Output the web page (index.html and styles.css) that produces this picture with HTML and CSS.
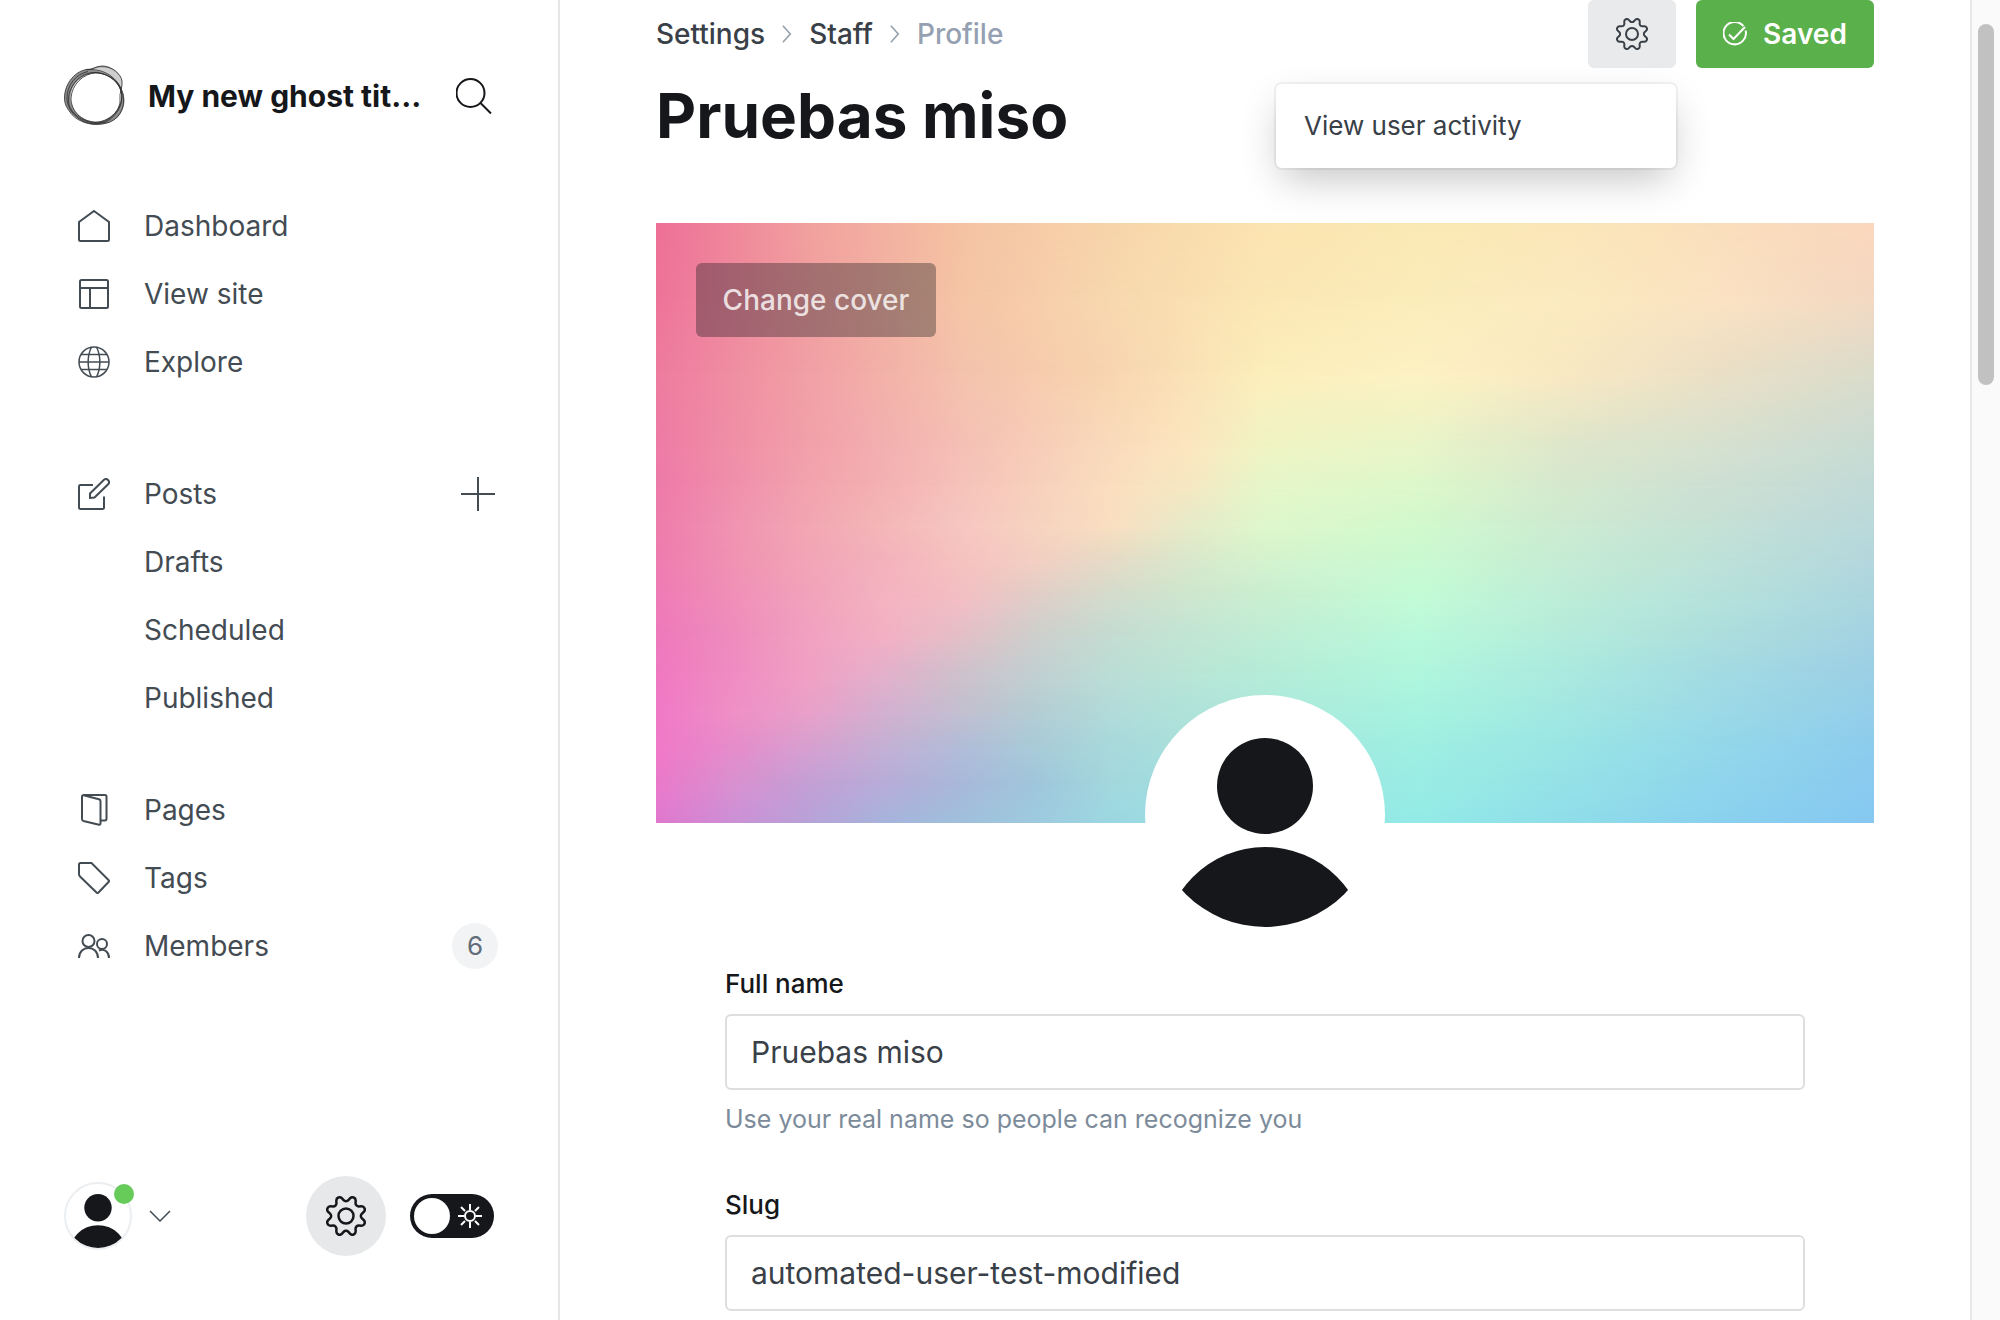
FILE: index.html
```html
<!DOCTYPE html>
<html lang="en">
<head>
<meta charset="utf-8">
<title>Settings - Staff - Profile</title>
<link rel="stylesheet" href="styles.css">
</head>
<body>
<svg class="defs" aria-hidden="true">
  <symbol id="cog" viewBox="0 0 24 24">
    <circle cx="12" cy="12" r="4.5"/>
    <path d="M10.546 2.438a1.957 1.957 0 0 0 2.908 0L14.4 1.4a1.959 1.959 0 0 1 3.41 1.413l-.071 1.4a1.958 1.958 0 0 0 2.051 2.054l1.4-.071a1.959 1.959 0 0 1 1.41 3.41l-1.042.94a1.96 1.96 0 0 0 0 2.909l1.042.94a1.959 1.959 0 0 1-1.413 3.41l-1.4-.071a1.958 1.958 0 0 0-2.056 2.056l.071 1.4A1.959 1.959 0 0 1 14.4 22.6l-.941-1.041a1.959 1.959 0 0 0-2.908 0L9.606 22.6A1.959 1.959 0 0 1 6.2 21.192l.072-1.4a1.958 1.958 0 0 0-2.056-2.056l-1.4.071A1.958 1.958 0 0 1 1.4 14.4l1.041-.94a1.96 1.96 0 0 0 0-2.909L1.4 9.606A1.958 1.958 0 0 1 2.809 6.2l1.4.071a1.958 1.958 0 0 0 2.058-2.06L6.2 2.81A1.959 1.959 0 0 1 9.606 1.4z"/>
  </symbol>
  <symbol id="person" viewBox="0 0 224 224">
    <clipPath id="person-clip"><circle cx="112" cy="112" r="112"/></clipPath>
    <g clip-path="url(#person-clip)">
      <circle cx="112" cy="83" r="48"/>
      <circle cx="112" cy="246" r="102"/>
    </g>
  </symbol>
</svg>
<div class="app">
  <nav class="sidebar" aria-label="Main">
    <header class="brand">
      <svg class="logo" viewBox="0 0 62 62" aria-hidden="true">
        <path class="logo-shade" fill-rule="evenodd" d="M.5 33C.5 20 9 8 22 4.500C28 5 32 1 38 1C48 1 57 9 58 16C58 20 57 24 58.500 27C62 34 61 44 54 52C46 59 38 60 31 59.500C20 59 10 52 6 47C2 42 .5 38 .5 33ZM6.500 32.500A25.500 24 0 1 0 57.500 32.500A25.500 24 0 1 0 6.500 32.500Z"/>
        <path class="logo-light" d="M28 5C38-2 56 5 58 16L58 24C53 12 40 6 28 5Z"/>
        <g class="logo-lines">
          <path d="M.5 33C.5 18 12 5 24 4.500C42 4 53 13 58.500 27C62 38 58 52 46 57C26 64 10 54 6 47C2 42 .5 38 .5 33Z"/>
          <path d="M22 4.500C28 5 32 1 38 1C48 1 57 9 58 16C59 22 55 28 56 34C57 46 44 58 31 59C16 59 3 46 3 33C3 20 12 9 24 6.500"/>
          <path d="M5 40C2 24 14 8 30 7.500C42 8 54 14 57 26C60 38 54 50 42 57C28 61 10 54 5 40Z"/>
          <path d="M7 33C8 19 19 9 32 7.500C44 8 57 18 58 30C58 46 44 57 31 57.500C17 56 7 46 7 33Z"/>
        </g>
      </svg>
      <span class="brand-name">My new ghost tit…</span>
      <button class="icon-button" type="button" aria-label="Search">
        <svg class="search-icon" viewBox="0 0 36 36"><circle cx="14.500" cy="15" r="14"/><path d="M24.500 25L35 35.500"/></svg>
      </button>
    </header>

    <ul class="nav-list">
      <li><a class="nav-link" href="#dashboard">
        <svg class="nav-icon" viewBox="0 0 32 32"><path d="M16 1L31 12V29.500Q31 31 29.500 31H2.500Q1 31 1 29.500V12Z"/></svg>
        Dashboard</a></li>
      <li><a class="nav-link" href="#site">
        <svg class="nav-icon" viewBox="0 0 32 32"><rect x="2" y="2" width="28" height="28" rx="1.500"/><path d="M2 10H30M12 10V30"/></svg>
        View site</a></li>
      <li><a class="nav-link" href="#explore">
        <svg class="nav-icon nav-icon-fine" viewBox="0 0 32 32"><circle cx="16" cy="16" r="15"/><path d="M1 16H31M3 8.500H29M3 23.500H29M13.500 1C9 10 9 22 13.500 31M18.500 1C23 10 23 22 18.500 31"/></svg>
        Explore</a></li>
    </ul>

    <ul class="nav-list">
      <li class="nav-row"><a class="nav-link" href="#posts">
        <svg class="nav-icon" viewBox="0 0 32 32"><path d="M15 7H2.500Q1 7 1 8.500V29.500Q1 31 2.500 31H24.500Q26 31 26 29.500V18.500"/><path d="M12 20V15.500L26 1.700Q28 .2 30 2Q32 4 30.400 6L16.500 19.500Z"/></svg>
        Posts</a>
        <button class="icon-button" type="button" aria-label="New post">
          <svg class="plus-icon" viewBox="0 0 34 34"><path d="M17 0V34M0 17H34"/></svg>
        </button></li>
      <li><a class="nav-link nav-sub" href="#drafts">Drafts</a></li>
      <li><a class="nav-link nav-sub" href="#scheduled">Scheduled</a></li>
      <li><a class="nav-link nav-sub" href="#published">Published</a></li>
    </ul>

    <ul class="nav-list">
      <li><a class="nav-link" href="#pages">
        <svg class="nav-icon" viewBox="0 0 32 32"><path d="M4 2.500Q4 1 5.500 1.300L21 5.300Q22.500 5.800 22.500 7.300V29.500Q22.500 31 21 30.700L5.500 27Q4 26.500 4 25Z"/><path d="M5 1H27Q28.500 1 28.500 2.500V24.500Q28.500 26.500 27 26.500H22.500"/></svg>
        Pages</a></li>
      <li><a class="nav-link" href="#tags">
        <svg class="nav-icon" viewBox="0 0 32 32"><path d="M1 2.500Q1 1 2.500 1H13.500L30.500 18Q31.500 19 30.500 20L20.500 30.500Q19.500 31.500 18.500 30.500L2 14.500Q1 13.500 1 12Z"/></svg>
        Tags</a></li>
      <li class="nav-row"><a class="nav-link" href="#members">
        <svg class="nav-icon" viewBox="0 0 32 32"><circle cx="10.500" cy="11" r="6"/><circle cx="24" cy="14" r="5"/><path d="M1 28C1 14.500 20 14.500 20 28M21 20.500C26 18 31 22 31 28"/></svg>
        Members</a>
        <span class="count">6</span></li>
    </ul>

    <footer class="sidebar-footer">
      <button class="user-menu" type="button" aria-label="Account menu">
        <span class="user-avatar"><svg class="user-figure"><use href="#person"/></svg><span class="user-dot"></span></span>
        <svg class="chevron-down" viewBox="0 0 22 12"><path d="M1 1L11 11L21 1"/></svg>
      </button>
      <a class="settings-link" href="#settings" aria-label="Settings"><svg class="settings-icon"><use href="#cog"/></svg></a>
      <label class="theme-switch">
        <input class="theme-input" type="checkbox" aria-label="Dark mode">
        <span class="theme-knob"></span>
        <svg class="sun-icon" viewBox="0 0 24 24"><circle cx="12" cy="12" r="5"/><path d="M12 0V6M12 18V24M0 12H6M18 12H24M3 3L7 7M17 17L21 21M3 21L7 17M17 7L21 3"/></svg>
      </label>
    </footer>
  </nav>

  <main class="main">
    <header class="page-header">
      <div class="heading">
        <nav class="breadcrumb" aria-label="Breadcrumb">
          <a href="#settings">Settings</a>
          <svg class="crumb-arrow" viewBox="0 0 12 22"><path d="M1 1L10 11L1 21"/></svg>
          <a href="#staff">Staff</a>
          <svg class="crumb-arrow" viewBox="0 0 12 22"><path d="M1 1L10 11L1 21"/></svg>
          <span class="crumb-current">Profile</span>
        </nav>
        <h1 class="page-title">Pruebas miso</h1>
      </div>
      <div class="actions">
        <div class="menu-anchor">
          <button class="menu-button" type="button" aria-label="User actions" aria-expanded="true"><svg class="menu-icon"><use href="#cog"/></svg></button>
          <div class="menu"><button class="menu-item" type="button">View user activity</button></div>
        </div>
        <button class="save-button" type="button">
          <svg class="saved-icon" viewBox="0 0 24 24"><path d="M20.500 4.200A11.200 11.200 0 1 0 22.600 8.500"/><path d="M6 12.500L10.500 17L22 5"/></svg>
          Saved</button>
      </div>
    </header>

    <section class="cover" aria-label="Cover image">
      <div class="wash wash-14"></div>
      <div class="wash wash-13"></div>
      <div class="wash wash-12"></div>
      <div class="wash wash-11"></div>
      <div class="wash wash-10"></div>
      <div class="wash wash-9"></div>
      <div class="wash wash-8"></div>
      <div class="wash wash-7"></div>
      <div class="wash wash-6"></div>
      <div class="wash wash-5"></div>
      <div class="wash wash-4"></div>
      <div class="wash wash-3"></div>
      <div class="wash wash-2"></div>
      <div class="wash wash-1"></div>
      <button class="cover-button" type="button">Change cover</button>
      <div class="profile-photo"><svg class="profile-figure"><use href="#person"/></svg></div>
    </section>

    <form class="profile-form">
      <div class="field">
        <label class="field-label" for="full-name">Full name</label>
        <input class="field-input" id="full-name" type="text" value="Pruebas miso">
        <p class="field-help">Use your real name so people can recognize you</p>
      </div>
      <div class="field">
        <label class="field-label" for="slug">Slug</label>
        <input class="field-input" id="slug" type="text" value="automated-user-test-modified">
      </div>
    </form>
  </main>
  <div class="scroll-track" aria-hidden="true"><div class="scroll-thumb"></div></div>
</div>
</body>
</html>
```
FILE: styles.css
```css
* { box-sizing: border-box; }

body {
  margin: 0;
  background: #fff;
  color: #15171a;
  font-family: Inter, "Liberation Sans", sans-serif;
  font-size: 28px;
  line-height: 36px;
}

button, input { font: inherit; color: inherit; }
button { margin: 0; padding: 0; border: 0; background: none; cursor: pointer; }
a { color: inherit; text-decoration: none; }
svg { display: block; flex: none; fill: none; stroke: currentColor; stroke-width: 2; }

.defs { position: absolute; width: 0; height: 0; }

.app { display: flex; min-height: 100vh; }

/* Sidebar */
.sidebar {
  display: flex;
  flex-direction: column;
  flex: none;
  width: 560px;
  padding: 64px 62px 64px 64px;
  border-right: 2px solid #e5e6e7;
  color: #434b53;
}

.brand {
  display: flex;
  align-items: center;
  height: 64px;
  margin-bottom: 64px;
  padding-right: 4px;
  color: #15171a;
}
.logo { width: 62px; height: 62px; margin-right: 22px; }
.logo-shade { fill: #8c8c8c; stroke: none; }
.logo-light { fill: #cfcfcf; stroke: none; }
.logo-lines { stroke: #2a2a2a; stroke-width: .8; }
.brand-name {
  flex: 1;
  min-width: 0;
  margin-right: 32px;
  overflow: hidden;
  font-size: 30px;
  font-weight: 700;
  text-overflow: ellipsis;
  white-space: nowrap;
}
.search-icon { width: 36px; height: 36px; stroke-width: 2; }

.nav-list { margin: 0 0 64px; padding: 0; list-style: none; }
.nav-row { display: flex; align-items: center; justify-content: space-between; }
.nav-link { display: flex; align-items: center; gap: 34px; height: 68px; padding-left: 14px; }
.nav-sub { padding-left: 80px; }
.nav-list:nth-of-type(2) { margin-bottom: 44px; }
.nav-icon { width: 32px; height: 32px; }
.nav-icon-fine { stroke-width: 1.5; }
.plus-icon { width: 34px; height: 34px; margin-right: 1px; }
.count {
  width: 46px;
  height: 46px;
  margin-right: -2px;
  border-radius: 50%;
  background: #f1f3f4;
  color: #626d79;
  font-size: 26px;
  line-height: 46px;
  text-align: center;
}

.sidebar-footer { display: flex; align-items: center; margin-top: auto; }
.user-menu { display: flex; align-items: center; gap: 17px; margin-right: auto; }
.user-avatar {
  position: relative;
  display: block;
  width: 68px;
  height: 68px;
  border: 2px solid #ebeef0;
  border-radius: 50%;
}
.user-figure { width: 64px; height: 64px; fill: #15171a; stroke: none; }
.user-dot {
  position: absolute;
  top: 0;
  right: -4px;
  width: 20px;
  height: 20px;
  border-radius: 50%;
  background: #67cb5a;
}
.chevron-down { width: 22px; height: 12px; stroke-width: 1.5; }
.settings-link {
  display: grid;
  place-items: center;
  width: 80px;
  height: 80px;
  margin-right: 24px;
  border-radius: 50%;
  background: #e7e8ea;
  color: #15171a;
}
.settings-icon { width: 40px; height: 40px; stroke-width: 1.5; }
.theme-switch {
  position: relative;
  display: flex;
  align-items: center;
  justify-content: space-between;
  width: 84px;
  height: 44px;
  margin-right: 2px;
  padding: 0 12px 0 4px;
  border-radius: 22px;
  background: #15171a;
  color: #fff;
}
.theme-input { position: absolute; inset: 0; margin: 0; opacity: 0; }
.theme-knob { width: 36px; height: 36px; border-radius: 50%; background: #fff; }
.sun-icon { width: 24px; height: 24px; }

/* Main column */
.main { flex: 1; min-width: 0; padding: 0 96px; }

.page-header { display: flex; justify-content: space-between; height: 223px; }
.breadcrumb {
  display: flex;
  align-items: center;
  gap: 16px;
  height: 68px;
  color: #394047;
  font-weight: 500;
}
.crumb-arrow { width: 12px; height: 18px; color: #95a1ad; }
.crumb-current { color: #95a1b2; }
.page-title { margin: 8px 0 0; font-size: 62px; font-weight: 700; line-height: 80px; }

.actions { display: flex; gap: 20px; height: 68px; }
.menu-anchor { position: relative; }
.menu-button {
  display: grid;
  place-items: center;
  width: 88px;
  height: 68px;
  border-radius: 6px;
  background: #e9eaec;
  color: #394047;
}
.menu-icon { width: 32px; height: 32px; stroke-width: 1.5; }
.menu {
  position: absolute;
  z-index: 1;
  top: 84px;
  right: 0;
  width: 400px;
  padding: 8px 0;
  border-radius: 6px;
  background: #fff;
  box-shadow: 0 0 0 2px rgba(0, 0, 0, .05), 0 16px 40px -6px rgba(0, 0, 0, .24);
}
.menu-item {
  width: 100%;
  height: 68px;
  padding: 0 28px;
  color: #394047;
  font-size: 26px;
  text-align: left;
}
.save-button {
  display: flex;
  align-items: center;
  justify-content: center;
  gap: 16px;
  width: 178px;
  height: 68px;
  border-radius: 6px;
  background: #5ab04b;
  color: #fff;
  font-weight: 600;
}
.saved-icon { width: 24px; height: 24px; }

/* Cover: each wash is one row of colours, fading into the row below it */
.cover { position: relative; height: 600px; padding: 40px; }
.wash { position: absolute; inset: 0; }
.wash-1 {
  background: linear-gradient(90deg, #ed6f97, #f1a09e, #f4c2a2, #f7d4aa, #fbe3b0, #fae9b4, #fbe6b8, #f9debc, #fad6bc);
  mask-image: linear-gradient(#000 0, transparent 12.5%);
}
.wash-2 {
  background: linear-gradient(90deg, #ee739a, #f19d9f, #f5c4a6, #f8d8ae, #fbe7b5, #fbecba, #fbeabf, #fbe2c2, #f3d8c2);
  mask-image: linear-gradient(#000 12.5%, transparent 25%);
}
.wash-3 {
  background: linear-gradient(90deg, #ee7b9f, #f1a0a5, #f4c2ac, #f8d5b0, #fceebb, #fdf2c3, #f9e8c2, #eadfc6, #dadccb);
  mask-image: linear-gradient(#000 25%, transparent 37.5%);
}
.wash-4 {
  background: linear-gradient(90deg, #ee7ba6, #f08fa6, #f2a0ab, #f3b0b0, #f5bfb6, #f7cdb8, #fadbbc, #fce6c0, #eff4c4 50%, #e8f5c8, #dde6cb, #d5e1d0, #c8dbd3);
  mask-image: linear-gradient(#000 37.5%, transparent 43.75%);
}
.wash-5 {
  background: linear-gradient(90deg, #ee7aa8, #f08fac, #f2a3ae, #f4b1b2, #f6c2ba, #f7d0bc, #fadebe, #f6e8c2, #e5f6c8 50%, #ddf8ca, #d5e8ce, #cddfd3, #c1dad7);
  mask-image: linear-gradient(#000 43.75%, transparent 50%);
}
.wash-6 {
  background: linear-gradient(90deg, #ee7caa, #f093b2, #f2a6b2, #f4b7b8, #f6c6c0, #f7d3c0, #fadfc0, #e7eac8, #dff7cb 50%, #d2f9cd, #cdead1, #c5e0d5, #bbd8db);
  mask-image: linear-gradient(#000 50%, transparent 56.25%);
}
.wash-7 {
  background: linear-gradient(90deg, #ee7cb0, #f092b2, #f2a5b6, #f3b2bc, #f6c2c0, #f3cfc2, #e5dbc6, #d9e8cb, #d4f3ce 50%, #cafad1, #c5ebd4, #bde1d8, #b3d7dd);
  mask-image: linear-gradient(#000 56.25%, transparent 62.5%);
}
.wash-8 {
  background: linear-gradient(90deg, #ef7bb6, #f08fb8, #f1a2bc, #f4b3c0, #f3bec3, #dfcec8, #d2dccd, #cde6cf, #c9eed1 50%, #c2fbd6, #bdecd8, #b5e1dc, #abd5df);
  mask-image: linear-gradient(#000 62.5%, transparent 68.75%);
}
.wash-9 {
  background: linear-gradient(90deg, #ee79bc, #ee8cbd, #f1a1c0, #f3b0c4, #e4bfc8, #cdcfcc, #c4dcd2, #c2e5d4, #bfedd4 50%, #b9f9da, #b4ebdb, #acdedd, #a3d2e2);
  mask-image: linear-gradient(#000 68.75%, transparent 75%);
}
.wash-10 {
  background: linear-gradient(90deg, #f078c0, #ef8cc2, #f1a0c4, #e4b0cb, #cec1cb, #c2d0d1, #bbded5, #b9e5d6, #b5ecd8 50%, #aff6dd, #aae9df, #a3dae3, #9bcfe5);
  mask-image: linear-gradient(#000 75%, transparent 81.25%);
}
.wash-11 {
  background: linear-gradient(90deg, #f079c6, #ef8fc6, #e9a0c8, #d4b0d0, #c3bfd0, #b4cdd3, #b2dbda, #b0e3d9, #ade9db 50%, #a7f3df, #a2e7e2, #9bd9e6, #94cee9);
  mask-image: linear-gradient(#000 81.25%, transparent 87.5%);
}
.wash-12 {
  background: linear-gradient(90deg, #f078c8, #e68cca, #d6a0d0, #c3b0d4, #b1bcd8, #a8cbd8, #a8d9db, #a7e0dc, #a5e5de 50%, #9eefe2, #99e4e5, #93d7ea, #8cccee);
  mask-image: linear-gradient(#000 87.5%, transparent 93.75%);
}
.wash-13 {
  background: linear-gradient(90deg, #ea79ca, #d890d0, #c39fd6, #b6acd9, #a8b8da, #9fc6db, #a2d8de, #a0dee0, #9ee3e0 50%, #99ede4, #94e1e7, #8fd4ec, #89caef);
  mask-image: linear-gradient(#000 93.75%, transparent);
}
.wash-14 {
  background: linear-gradient(90deg, #e078ce, #cc90d6, #b8a2d8, #a6b4dc, #9fc0dc, #9ecbdf, #9cd8e2, #9adce3, #97e0e3 50%, #93ebe7, #8fddea, #8ad1ef, #86c8f1);
}
.cover-button {
  position: relative;
  width: 240px;
  height: 74px;
  border-radius: 6px;
  background: rgba(21, 23, 26, .35);
  color: rgba(255, 255, 255, .8);
  font-weight: 500;
}
.profile-photo {
  position: absolute;
  bottom: -112px;
  left: 50%;
  width: 240px;
  height: 240px;
  margin-left: -120px;
  padding: 8px;
  border-radius: 50%;
  background: #fff;
}
.profile-figure { width: 224px; height: 224px; fill: #15171a; stroke: none; }

/* Profile form */
.profile-form { max-width: 1080px; margin: 0 auto; padding-top: 143px; }
.field { margin-bottom: 50px; }
.field:last-child { margin-bottom: 0; }
.field-label {
  display: block;
  margin-bottom: 12px;
  font-size: 26px;
  font-weight: 500;
}
.field-input {
  display: block;
  width: 100%;
  height: 76px;
  padding: 0 24px;
  border: 2px solid #dddedf;
  border-radius: 6px;
  background: #fff;
  color: #394047;
  font-size: 30px;
}
.field-help { margin: 11px 0 0; color: #7c8b9a; font-size: 25px; }

/* Scrollbar */
.scroll-track { flex: none; width: 30px; padding: 24px 6px; border-left: 2px solid #e8e8e8; background: #fafafa; }
.scroll-thumb { width: 16px; height: 361px; border-radius: 8px; background: #c1c1c1; }
```
